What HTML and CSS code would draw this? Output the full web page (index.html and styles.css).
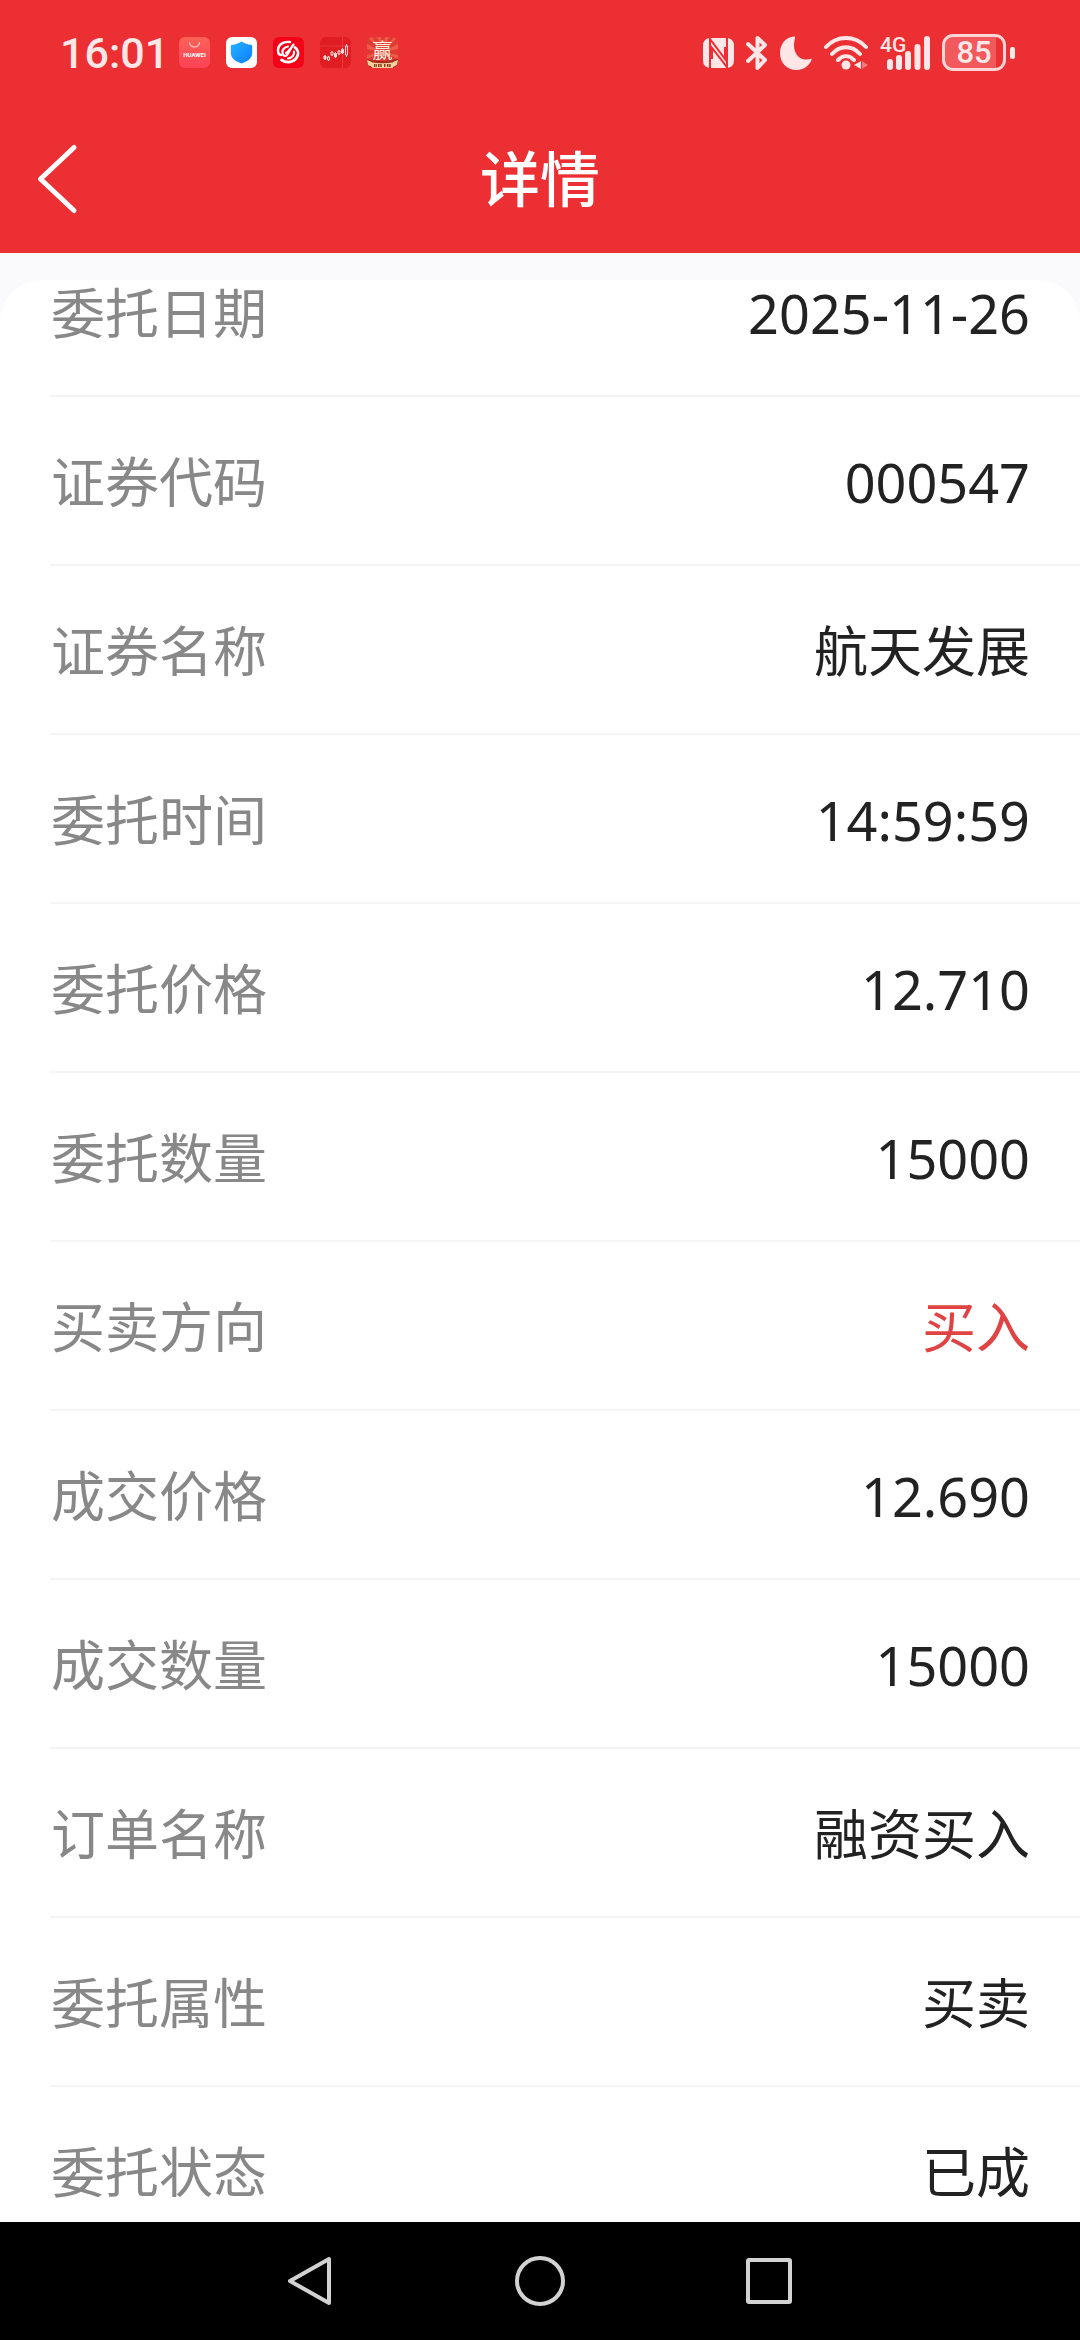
FILE: index.html
```html
<!DOCTYPE html>
<html lang="zh-CN">
<head>
<meta charset="utf-8">
<meta name="viewport" content="width=device-width, initial-scale=1">
<title>详情</title>
<link rel="stylesheet" href="styles.css">
</head>
<body>
<div class="status">
  <time class="clock">16:01</time>
  <div class="apps">
    <svg class="app" viewBox="0 0 31 31" aria-hidden="true">
      <defs><linearGradient id="store" x1="0" y1="0" x2="0" y2="1"><stop offset="0" stop-color="#ff6257"/><stop offset="1" stop-color="#fb4257"/></linearGradient></defs>
      <rect width="31" height="31" rx="6" fill="url(#store)"/>
      <path d="M10.500 5.500a5 4.500 0 0 0 10 0" fill="none" stroke="#ffc9c6" stroke-width="1.200" stroke-linecap="round"/>
      <text x="15.500" y="20" text-anchor="middle" class="store-name">HUAWEI</text>
    </svg>
    <svg class="app" viewBox="0 0 31 31" aria-hidden="true">
      <defs><linearGradient id="shield" x1="0" y1="0" x2="1" y2="1"><stop offset="0" stop-color="#25b4ff"/><stop offset="1" stop-color="#0a7bff"/></linearGradient></defs>
      <rect width="31" height="31" rx="6" fill="#fff"/>
      <path d="M15.500 4.500c3 2 6 3 9.500 3.300q1.200.2 1.200 1.500v6.500c0 5-4 8.500-10.700 10.700C8.800 24.300 4.800 20.800 4.800 15.800V9.300q0-1.300 1.200-1.500c3.500-.3 6.500-1.300 9.500-3.300z" fill="url(#shield)"/>
    </svg>
    <svg class="app" viewBox="0 0 31 31" aria-hidden="true">
      <rect width="31" height="31" rx="6" fill="#f40018"/>
      <g fill="none" stroke="#fff" stroke-linecap="round">
        <path d="M17 5C10 4 5 8 5 13c0 3 1 5 3 5" stroke-width="2.400"/>
        <path d="M15 9.500c-4 .5-6 3.500-5.500 6.500s3 3.500 4.500 2 3-6 6.500-10.500" stroke-width="2.200"/>
        <path d="M13 16c2-1 3-3 4-4" stroke-width="2"/>
        <path d="M22 10.500c3 2 4 6 2 9.500-3 5.500-10 6.500-15.500 3" stroke-width="2.800"/>
        <path d="M21 14.500c.5 3-1.500 6.500-6 7" stroke-width="2.200"/>
      </g>
    </svg>
    <svg class="app" viewBox="0 0 31 31" aria-hidden="true">
      <rect width="31" height="31" rx="6" fill="#df1d22"/>
      <path d="M0 9h31M22.500 0v31" stroke="#e8393b" stroke-width="1"/>
      <g stroke="#ffd9d6" stroke-width="1">
        <path d="M5 18v5M8.500 19v5M12 14v5M15.500 15v6M19 13v5M22.500 11v6M26.500 7v13"/>
        <g fill="#ffd9d6"><path d="M4 19h2v3H4zM14.500 16.500h2v3.500h-2zM21.500 12.500h2v3.500h-2z"/></g>
        <g fill="#df1d22"><path d="M7.500 20h2v3h-2zM11 15h2v3h-2zM18 14h2v3h-2zM25.500 9h2v9h-2z"/></g>
      </g>
    </svg>
    <svg class="app" viewBox="0 0 31 31" aria-hidden="true">
      <defs><clipPath id="win"><rect width="31" height="31" rx="6"/></clipPath></defs>
      <g clip-path="url(#win)">
        <rect width="31" height="31" fill="#df3b31"/>
        <path d="M15.500 15 0 0h5zM15.500 15 10 0h4zM15.500 15 18 0h4zM15.500 15 27 0h4zM15.500 15 0 7v5zM15.500 15 31 7v5zM15.500 15 0 18v4zM15.500 15 31 18v4z" fill="#ec5b4a"/>
        <text x="15.500" y="21" text-anchor="middle" class="win-name">赢</text>
        <path d="M0 22q15.500 4 31 0v4l-3 5H3l-3-5z" fill="#a92a1c"/>
        <path d="M0 23l5 2v5l-4-2zM31 23l-5 2v5l4-2zM5 25.500q10.500 1.500 21 0V31H5z" fill="#f5cf9c"/>
        <path d="M7 28.500h3m1 0h4m2 0h2m1 0h4" stroke="#8a3a1c" stroke-width="3" stroke-dasharray="1.500 .7"/>
      </g>
    </svg>
  </div>
  <div class="indicators">
    <svg width="31" height="36" viewBox="0 0 31 36" aria-hidden="true">
      <path d="M8 3h15q8 0 8 8v14q0 8-8 8H8q-8 0-8-8V11q0-8 8-8z" fill="#ffe6e7"/>
      <path d="M7 33V4l15 20V12M24 3v29L9 13v11" fill="none" stroke="#ec2f32" stroke-width="2"/>
    </svg>
    <svg width="22" height="36" viewBox="0 0 22 36" aria-hidden="true">
      <path d="M2 9 19 25 11.500 33V3L19 10 2 26" fill="none" stroke="#ffe6e7" stroke-width="4" stroke-linejoin="round" stroke-linecap="round"/>
    </svg>
    <svg width="32" height="36" viewBox="0 0 32 36" aria-hidden="true">
      <path d="M14 1.500C6 2 0 9 0 18c0 10 7 17 16.500 17 7 0 12.500-4 15-10 .3-1-.5-1.500-1.500-1-10 3-19-6-15-21 .3-1-.2-1.500-1-1.500z" fill="#ffe6e7"/>
    </svg>
    <svg width="44" height="36" viewBox="0 0 44 36" aria-hidden="true">
      <g fill="none" stroke="#ffe6e7" stroke-width="4" stroke-linecap="round">
        <path d="M2 12c11-12 29-12 40 0M8 19c8-9 20-9 28 0M14 25c5-5 11-5 16 0"/>
      </g>
      <circle cx="22" cy="30" r="4.500" fill="#ffe6e7"/>
      <path d="M37 26v8l-7-4z" fill="#ffe6e7"/>
      <path d="M38 26v8l6-4z" fill="#f5787c"/>
    </svg>
    <svg class="signal" width="50" height="36" viewBox="0 0 50 36" role="img" aria-label="4G">
      <text x="0" y="17" class="network">4G</text>
      <path d="M10 27v5M19 23v9M28 19v13M37.500 12v20M47 4v28" stroke="#ffe6e7" stroke-width="6" stroke-linecap="round"/>
    </svg>
    <div class="battery"><span class="level">85</span></div>
  </div>
</div>

<header class="header">
  <button class="back" type="button" aria-label="返回">
    <svg width="42" height="72" viewBox="0 0 42 72" aria-hidden="true"><path d="M38 4.500 4.500 36 38 67.500" fill="none" stroke="#fff" stroke-width="5" stroke-linecap="round" stroke-linejoin="round"/></svg>
  </button>
  <h1 class="title">详情</h1>
</header>

<main class="content">
  <dl class="card">
    <div class="row"><dt>委托日期</dt><dd>2025-11-26</dd></div>
    <div class="row"><dt>证券代码</dt><dd>000547</dd></div>
    <div class="row"><dt>证券名称</dt><dd>航天发展</dd></div>
    <div class="row"><dt>委托时间</dt><dd>14:59:59</dd></div>
    <div class="row"><dt>委托价格</dt><dd>12.710</dd></div>
    <div class="row"><dt>委托数量</dt><dd>15000</dd></div>
    <div class="row"><dt>买卖方向</dt><dd class="buy">买入</dd></div>
    <div class="row"><dt>成交价格</dt><dd>12.690</dd></div>
    <div class="row"><dt>成交数量</dt><dd>15000</dd></div>
    <div class="row"><dt>订单名称</dt><dd>融资买入</dd></div>
    <div class="row"><dt>委托属性</dt><dd>买卖</dd></div>
    <div class="row"><dt>委托状态</dt><dd>已成</dd></div>
  </dl>
</main>

<nav class="nav">
  <button type="button" aria-label="后退"><svg width="52" height="52" viewBox="0 0 52 52" aria-hidden="true"><path d="M44 4v44L5 26z"/></svg></button>
  <button type="button" aria-label="主屏幕"><svg width="52" height="52" viewBox="0 0 52 52" aria-hidden="true"><circle cx="26" cy="26" r="23"/></svg></button>
  <button type="button" aria-label="最近任务"><svg width="52" height="52" viewBox="0 0 52 52" aria-hidden="true"><rect x="5" y="5" width="42" height="42" rx="1"/></svg></button>
</nav>
</body>
</html>
```
FILE: styles.css
```css
* {
  box-sizing: border-box;
}

body {
  margin: 0;
  height: 100vh;
  display: flex;
  flex-direction: column;
  background: #fafafc;
  color: #222;
  font-family: "Noto Sans", "Noto Sans CJK SC", sans-serif;
}

button {
  display: grid;
  place-items: center;
  padding: 0;
  border: 0;
  background: none;
}

svg {
  display: block;
}

.status {
  display: flex;
  align-items: center;
  height: 105px;
  padding: 0 65px 0 60px;
  background: #ec2f32;
  color: #ffe6e7;
  font-family: Roboto, "Noto Sans CJK SC", sans-serif;
}

.clock {
  width: 119px;
  font-size: 43px;
  font-weight: 500;
  line-height: 52px;
}

.apps {
  display: flex;
  gap: 16px;
}

.app {
  width: 31px;
  height: 31px;
}

.store-name {
  fill: #fff;
  font-size: 6px;
  font-weight: 700;
}

.win-name {
  fill: #fff3e6;
  font-size: 20px;
}

.indicators {
  display: flex;
  align-items: center;
  gap: 12px;
  margin-left: auto;
}

.signal {
  overflow: visible;
}

.network {
  fill: #ffe6e7;
  font-size: 21px;
  font-weight: 500;
}

.battery {
  display: flex;
  align-items: center;
  gap: 4px;
}

.battery::after {
  content: "";
  width: 5px;
  height: 12px;
  border-radius: 2px;
  background: #ffe6e7;
}

.level {
  width: 64px;
  height: 37px;
  border: 3px solid #ffd5d6;
  border-radius: 11px;
  background: linear-gradient(90deg, #f2595c 88%, #ec2f32 88%);
  font-size: 31px;
  font-weight: 500;
  line-height: 32px;
  text-align: center;
}

.header {
  display: grid;
  grid-template-columns: 1fr auto 1fr;
  align-items: center;
  height: 148px;
  padding: 0 36px;
  background: #ec2f32;
  color: #fff;
}

.back {
  justify-self: start;
}

.title {
  margin: 0;
  font-size: 60px;
  font-weight: 500;
  line-height: 72px;
}

.content {
  flex: 1;
  min-height: 0;
  overflow: hidden;
  padding-top: 27px;
}

.card {
  margin: 0;
  padding-left: 50px;
  border-radius: 42px 42px 0 0;
  background: #fff;
}

.row {
  display: flex;
  justify-content: space-between;
  padding: 53px 50px 50px 1px;
  border-bottom: 2px solid #f4f4f4;
  font-size: 54px;
  line-height: 64px;
}

.row:first-child {
  padding-top: 1px;
}

dt {
  color: #888;
}

dd {
  margin: 0;
}

.buy {
  color: #e04343;
}

.nav {
  display: flex;
  justify-content: center;
  gap: 177px;
  height: 118px;
  background: #000;
}

.nav svg {
  fill: none;
  stroke: #d2d2d2;
  stroke-width: 4;
  stroke-linejoin: round;
}
```
